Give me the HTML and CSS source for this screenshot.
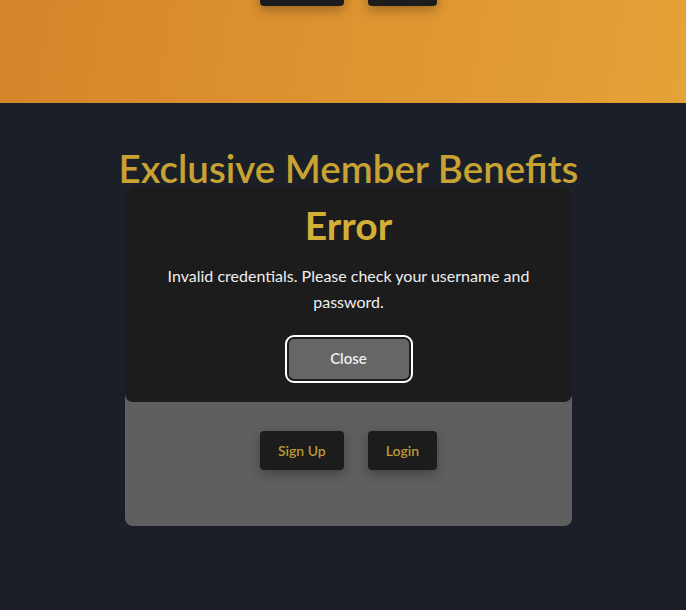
FILE: index.html
```
<!DOCTYPE html>
<html lang="en">
<head>
<meta charset="utf-8">
<title>Exclusive Member Benefits</title>
<link rel="stylesheet" href="styles.css">
</head>
<body>
<header class="hero">
  <div class="actions actions-hero">
    <button class="btn">Sign Up</button>
    <button class="btn">Login</button>
  </div>
</header>
<main class="benefits">
  <h2 class="benefits-title">Exclusive Member Benefits</h2>
  <section class="card">
    <div class="actions">
      <button class="btn btn-muted">Sign Up</button>
      <button class="btn btn-muted">Login</button>
    </div>
    <div class="modal" role="dialog">
      <h3 class="modal-title">Error</h3>
      <p class="modal-text">Invalid credentials. Please check your username and password.</p>
      <button class="btn-close">Close</button>
    </div>
  </section>
</main>
</body>
</html>
```
FILE: styles.css
```
* { box-sizing: border-box; }
html, body { margin: 0; padding: 0; }
body {
  background: #1b1f27;
  font-family: "Lato", "Noto Sans", sans-serif;
  height: 610px;
  overflow: hidden;
}
.hero {
  height: 103px;
  overflow: hidden;
  background: linear-gradient(100deg, #d6852a 0%, #e5a238 100%);
  padding-left: 11px;
}
.actions {
  display: flex;
  justify-content: center;
  gap: 24px;
}
.actions-hero {
  margin-top: -33px;
}
.btn {
  height: 39px;
  padding: 0 18px;
  border: none;
  border-radius: 4px;
  background: #1c1c1c;
  color: #c9a43a;
  font-family: inherit;
  font-size: 14px;
  font-weight: 600;
  box-shadow: 0 4px 12px rgba(0, 0, 0, 0.3);
}
.btn-muted {
  color: #bd9833;
}
.benefits {
  padding-left: 11px;
  display: flex;
  flex-direction: column;
  align-items: center;
}
.benefits-title {
  margin: 48px 0 0;
  font-size: 38.5px;
  line-height: 35px;
  font-weight: 600;
  color: #c8a233;
  white-space: nowrap;
}
.card {
  position: relative;
  width: 447px;
  height: 340px;
  background: #5f5f5f;
  border-radius: 8px;
  display: flex;
  flex-direction: column;
  justify-content: flex-end;
  padding-bottom: 56px;
}
.modal {
  position: absolute;
  top: 0;
  left: 0;
  right: 0;
  height: 216px;
  background: #1c1c1c;
  border-radius: 8px;
  padding: 21px 30px 23px;
  display: flex;
  flex-direction: column;
  align-items: center;
  text-align: center;
}
.modal-title {
  margin: 0;
  font-size: 39px;
  line-height: 36px;
  font-weight: 700;
  color: #d4af37;
}
.modal-text {
  margin: 20px 0 0;
  font-size: 16px;
  line-height: 26px;
  color: #eeeeee;
}
.btn-close {
  margin-top: 24px;
  width: 120px;
  height: 40px;
  padding: 0 0 2px;
  border: none;
  border-radius: 5px;
  background: #666666;
  color: #eeeeee;
  font-family: inherit;
  font-size: 15px;
  font-weight: 600;
  outline: 2px solid #ffffff;
  outline-offset: 2px;
}
```
